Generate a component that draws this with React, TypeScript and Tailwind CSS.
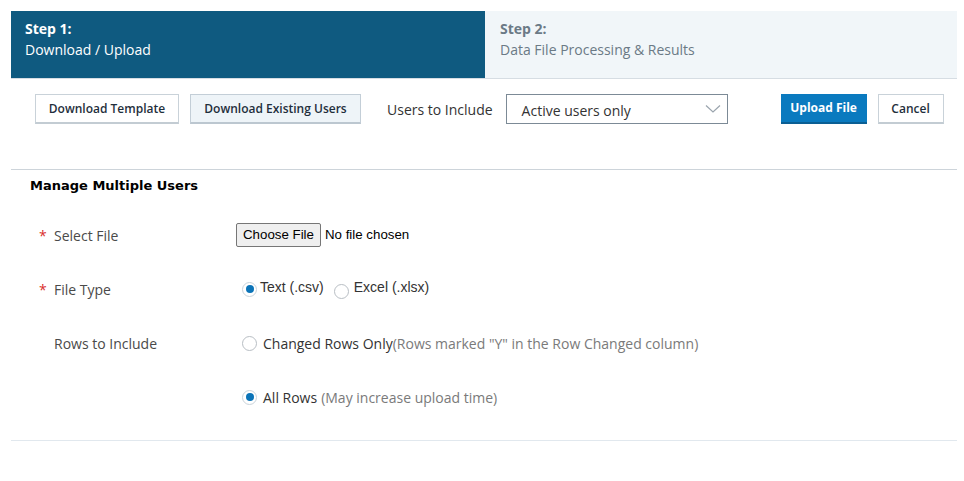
import { useState } from 'react';

const sans = "font-['Open_Sans',sans-serif]";

function Radio({ checked, onClick }: { checked: boolean; onClick: () => void }) {
  return (
    <span
      onClick={onClick}
      className={`inline-flex h-[15px] w-[15px] shrink-0 cursor-pointer items-center justify-center rounded-full border ${
        checked ? 'border-[#c9d3da]' : 'border-[#b8bec4]'
      } bg-white`}
    >
      {checked && <span className="h-[8px] w-[8px] rounded-full bg-[#0b74b8]" />}
    </span>
  );
}

export default function App() {
  const [fileType, setFileType] = useState<'csv' | 'xlsx'>('csv');
  const [rows, setRows] = useState<'changed' | 'all'>('all');

  return (
    <div className={`min-h-screen bg-white pt-[11px] ${sans}`}>
      <div className="ml-[11px] mr-[7px]">
        {/* Steps header */}
        <div className="flex h-[68px] border-b border-[#d6dde3]">
          <div className="w-[474px] bg-[#0f5a80] pl-[14px] pt-[7px] text-[14px] leading-[21px] text-white">
            <div className="font-bold">Step 1:</div>
            <div>Download / Upload</div>
          </div>
          <div className="flex-1 bg-[#f1f6f9] pl-[15px] pt-[7px] text-[14px] leading-[21px] text-[#6b7a86]">
            <div className="font-bold">Step 2:</div>
            <div>Data File Processing &amp; Results</div>
          </div>
        </div>

        {/* Actions */}
        <div className="flex items-center pl-[24px] pt-[15px]">
          <button className="h-[30px] w-[144px] border border-[#c9d2d9] border-b-2 border-b-[#c3ccd3] bg-white text-[12px] font-semibold text-[#1f2f3c]">
            Download Template
          </button>
          <button className="ml-[11px] h-[30px] w-[171px] border border-[#c3ced7] border-b-2 border-b-[#bcc7d0] bg-[#eef4f8] text-[12px] font-semibold text-[#1f2f3c]">
            Download Existing Users
          </button>
          <span className="ml-[26px] text-[14px] text-[#333]">Users to Include</span>
          <div className="ml-[13px] flex h-[30px] w-[222px] items-center justify-between border border-[#7c8a96] pl-[15px] pr-[6px] text-[14px] text-[#333]">
            <span className="translate-y-[1px]">Active users only</span>
            <svg width="16" height="10" viewBox="0 0 16 10" fill="none">
              <polyline points="1,1.5 8,8 15,1.5" stroke="#9aa4ad" strokeWidth="1.2" />
            </svg>
          </div>
          <button className="ml-[53px] h-[30px] w-[86px] border-b-2 border-b-[#0b5f94] bg-[#0a7abf] text-[12px] font-bold text-white">
            Upload File
          </button>
          <button className="ml-[11px] h-[30px] w-[66px] border border-[#c9d2d9] border-b-2 border-b-[#c3ccd3] bg-white text-[12px] font-semibold text-[#1f2f3c]">
            Cancel
          </button>
        </div>

        {/* Form */}
        <div className="mt-[45px] border-t border-[#cdd4da]">
          <h2 className="pl-[19px] pt-[6px] font-['DejaVu_Sans',sans-serif] text-[13px] font-bold leading-[20px] text-black">
            Manage Multiple Users
          </h2>

          <div className="mt-[12px] grid grid-cols-[225px_1fr] text-[14px] text-[#4a4a4a]">
            <div className="flex h-[54px] items-center pl-[28px]">
              <span className="w-[15px] text-[#d9302c]">*</span>
              <span>Select File</span>
            </div>
            <div className="flex h-[54px] items-center">
              <input
                type="file"
                className="font-['Liberation_Sans',sans-serif] text-[13.3px] text-black file:mr-[4px] file:rounded-[2px] file:border file:border-solid file:border-[#767676] file:bg-[#efefef] file:px-[6px] file:py-[1px]"
              />
            </div>

            <div className="flex h-[54px] items-center pl-[28px]">
              <span className="w-[15px] text-[#d9302c]">*</span>
              <span>File Type</span>
            </div>
            <div className="flex h-[54px] items-center pl-[6px] font-['Liberation_Sans',sans-serif] text-[14px]">
              <Radio checked={fileType === 'csv'} onClick={() => setFileType('csv')} />
              <span className="ml-[3px] -translate-y-[2px] text-[#333]">Text (.csv)</span>
              <span className="ml-[10px] mt-[4px] flex">
                <Radio checked={fileType === 'xlsx'} onClick={() => setFileType('xlsx')} />
              </span>
              <span className="ml-[5px] -translate-y-[2px] text-[#333]">Excel (.xlsx)</span>
            </div>

            <div className="flex h-[54px] items-center pl-[43px]">
              <span>Rows to Include</span>
            </div>
            <div className="flex h-[54px] items-center pl-[6px]">
              <Radio checked={rows === 'changed'} onClick={() => setRows('changed')} />
              <span className="ml-[6px] text-[#333]">Changed Rows Only</span>
              <span className="text-[#7a7a7a]">(Rows marked "Y" in the Row Changed column)</span>
            </div>

            <div className="h-[54px]" />
            <div className="flex h-[54px] items-center pl-[6px]">
              <Radio checked={rows === 'all'} onClick={() => setRows('all')} />
              <span className="ml-[6px] text-[#333]">All Rows</span>
              <span className="ml-[4px] text-[#7a7a7a]">(May increase upload time)</span>
            </div>
          </div>

          <div className="mt-[16px] border-t border-[#e1e8ee]" />
        </div>
      </div>
    </div>
  );
}
